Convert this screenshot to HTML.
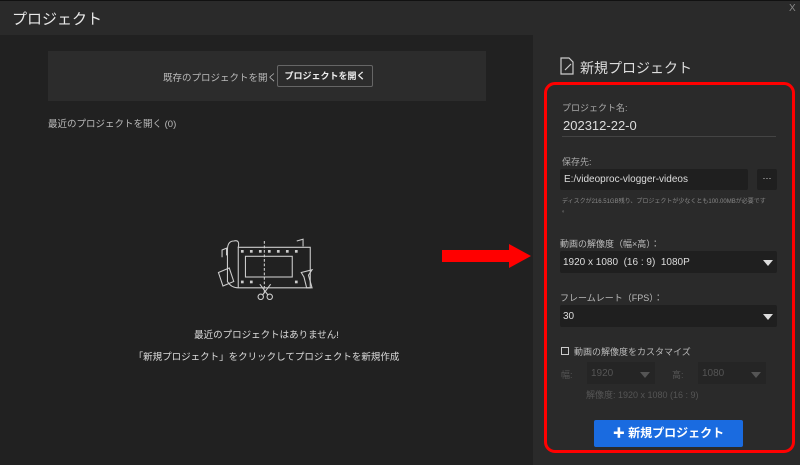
<!DOCTYPE html>
<html><head><meta charset="utf-8"><style>
*{margin:0;padding:0;box-sizing:border-box}
body{width:800px;height:465px;background:#212121;font-family:"Liberation Sans","Noto Sans CJK JP",sans-serif;color:#ccc;position:relative;overflow:hidden}
.a{position:absolute;white-space:nowrap}
.title{left:0;top:0;width:800px;height:35px;background:#2a2a2a;border-top:1px solid #111}
.inp{background:#1f1f1f;border-radius:2px}
.tri{width:0;height:0;border-left:5px solid transparent;border-right:5px solid transparent;border-top:6px solid #ddd}
</style></head><body>
<div class="a title"></div>
<div class="a" style="left:12px;top:8px;font-size:15px;color:#e8e8e8">プロジェクト</div>
<div class="a" style="left:789px;top:3px;font-size:10px;color:#888">X</div>
<div class="a" style="left:533px;top:35px;width:267px;height:430px;background:#2a2a2a"></div>
<div class="a" style="left:48px;top:51px;width:438px;height:50px;background:#2c2c2c"></div>
<div class="a" style="left:163px;top:70px;font-size:9.5px;color:#bbb">既存のプロジェクトを開く</div>
<div class="a" style="left:277px;top:65px;width:96px;height:22px;border:1px solid #666;border-radius:2px;font-size:9px;font-weight:bold;color:#eee;text-align:center;line-height:20px">プロジェクトを開く</div>
<div class="a" style="left:48px;top:116px;font-size:9.5px;color:#bbb">最近のプロジェクトを開く (0)</div>
<svg class="a" style="left:203px;top:232px" width="120" height="72" viewBox="0 0 115 80" fill="none" stroke="#ccc" stroke-width="1.2">
<path d="M25 10 Q18 10 18 20 V55 Q22 62 30 62 H110 V17 H30 Q32 8 25 10Z"/>
<path d="M30 17 V62"/><rect x="38" y="27" width="52" height="23"/>
<path d="M59 10 V70" stroke-dasharray="3 2"/>
<g fill="#ccc" stroke="none"><rect x="33" y="20" width="3" height="3"/><rect x="43" y="20" width="3" height="3"/><rect x="53" y="20" width="3" height="3"/><rect x="63" y="20" width="3" height="3"/><rect x="73" y="20" width="3" height="3"/><rect x="83" y="20" width="3" height="3"/><rect x="93" y="20" width="3" height="3"/><rect x="33" y="54" width="3" height="3"/><rect x="43" y="54" width="3" height="3"/><rect x="93" y="54" width="3" height="3"/></g>
<path d="M8 45 L20 40 L25 55 L13 60Z"/><path d="M100 45 L112 42 L108 48 L112 62 L106 62 L103 50Z"/>
<circle cx="55" cy="72" r="3"/><circle cx="65" cy="72" r="3"/><path d="M57 70 L66 58 M63 70 L54 58"/>
<path d="M12 28 V20 L17 18 V26"/><path d="M95 10 L102 8 V16"/>
</svg>
<div class="a" style="left:0;width:533px;top:327px;text-align:center;font-size:9.5px;color:#ddd">最近のプロジェクトはありません!</div>
<div class="a" style="left:0;width:533px;top:349px;text-align:center;font-size:9.5px;color:#ddd">「新規プロジェクト」をクリックしてプロジェクトを新規作成</div>
<svg class="a" style="left:442px;top:244px" width="90" height="24"><path d="M0 6 H67 V0 L89 12 L67 24 V18 H0Z" fill="#f00"/></svg>
<svg class="a" style="left:560px;top:57px" width="14" height="18" fill="none" stroke="#ccc" stroke-width="1.2"><path d="M1 1 H9 L13 5 V17 H1Z"/><path d="M5 13 L11 7"/></svg>
<div class="a" style="left:580px;top:58px;font-size:14px;color:#ddd">新規プロジェクト</div>
<div class="a" style="left:544px;top:82px;width:251px;height:371px;border:3px solid #f00;border-radius:11px"></div>
<div class="a" style="left:562px;top:101px;font-size:9px;color:#aaa">プロジェクト名:</div>
<div class="a" style="left:563px;top:118px;font-size:13px;color:#ddd">202312-22-0</div>
<div class="a" style="left:562px;top:136px;width:214px;height:1px;background:#444"></div>
<div class="a" style="left:562px;top:155px;font-size:9px;color:#aaa">保存先:</div>
<div class="a inp" style="left:560px;top:169px;width:188px;height:21px"></div>
<div class="a" style="left:564px;top:174px;font-size:10px;color:#ddd">E:/videoproc-vlogger-videos</div>
<div class="a inp" style="left:757px;top:169px;width:20px;height:21px;text-align:center;font-size:9px;color:#ddd;line-height:18px">···</div>
<div class="a" style="left:562px;top:196px;font-size:6px;color:#888">ディスクが216.51GB残り、プロジェクトが少なくとも100.00MBが必要です</div>
<div class="a" style="left:562px;top:205px;font-size:6px;color:#888">。</div>
<div class="a" style="left:560px;top:237px;font-size:9px;color:#bbb">動画の解像度（幅×高）：</div>
<div class="a inp" style="left:560px;top:251px;width:217px;height:22px"></div>
<div class="a" style="left:563px;top:257px;font-size:10px;color:#ddd">1920 x 1080 &nbsp;(16 : 9) &nbsp;1080P</div>
<div class="a tri" style="left:763px;top:260px"></div>
<div class="a" style="left:560px;top:291px;font-size:9px;color:#bbb">フレームレート（FPS）：</div>
<div class="a inp" style="left:560px;top:305px;width:217px;height:22px"></div>
<div class="a" style="left:563px;top:311px;font-size:10px;color:#ddd">30</div>
<div class="a tri" style="left:763px;top:314px"></div>
<div class="a" style="left:561px;top:347px;width:8px;height:8px;border:1px solid #ccc"></div>
<div class="a" style="left:574px;top:345px;font-size:9px;color:#bbb">動画の解像度をカスタマイズ</div>
<div class="a" style="left:561px;top:368px;font-size:9px;color:#555">幅:</div>
<div class="a" style="left:587px;top:362px;width:68px;height:22px;background:#252525"></div>
<div class="a" style="left:591px;top:368px;font-size:10px;color:#555">1920</div>
<div class="a tri" style="left:640px;top:372px;border-top-color:#555"></div>
<div class="a" style="left:672px;top:368px;font-size:9px;color:#555">高:</div>
<div class="a" style="left:698px;top:362px;width:68px;height:22px;background:#252525"></div>
<div class="a" style="left:702px;top:368px;font-size:10px;color:#555">1080</div>
<div class="a tri" style="left:751px;top:372px;border-top-color:#555"></div>
<div class="a" style="left:586px;top:388px;font-size:9px;color:#555">解像度: 1920 x 1080 (16 : 9)</div>
<div class="a" style="left:594px;top:420px;width:149px;height:27px;background:#1a6be0;border-radius:2px;text-align:center;line-height:27px;font-size:12px;font-weight:bold;color:#fff">✚ 新規プロジェクト</div>
</body></html>
